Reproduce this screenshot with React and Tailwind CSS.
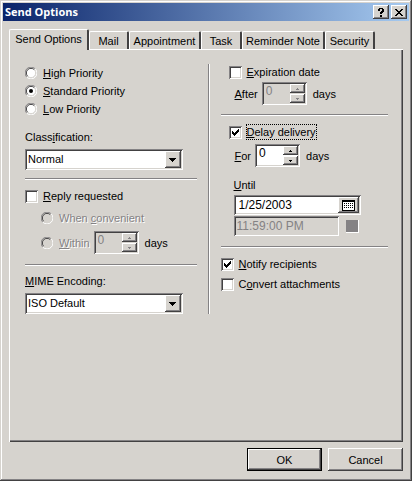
import React, { useState } from "react";

const raised =
  "bg-[#d6d3ce] shadow-[inset_-1px_-1px_#424142,inset_1px_1px_#ffffff,inset_-2px_-2px_#848284]";
const sunken =
  "shadow-[inset_1px_1px_#848284,inset_-1px_-1px_#ffffff,inset_2px_2px_#424142,inset_-2px_-2px_#d6d3ce]";
const disabledText = "text-[#848284] [text-shadow:1px_1px_#ffffff]";

const tabs = [
  { label: "Send Options", width: "w-20" },
  { label: "Mail", width: "w-[40px]" },
  { label: "Appointment", width: "w-[72px]" },
  { label: "Task", width: "w-[41px]" },
  { label: "Reminder Note", width: "w-[83px]" },
  { label: "Security", width: "w-[50px]" },
];

const Divider = () => (
  <hr className="h-[2px] border-0 border-t border-[#848284] bg-white" />
);

const Radio = ({ id, name, children, disabled, ...props }) => (
  <div className="flex items-center gap-1.5">
    <span className="relative flex h-3 w-3">
      <input
        id={id}
        name={name}
        type="radio"
        disabled={disabled}
        className="peer h-3 w-3 appearance-none"
        {...props}
      />
      <svg
        viewBox="0 0 12 12"
        className="pointer-events-none absolute inset-0 h-3 w-3 peer-checked:[&_.dot]:opacity-100"
        fill="none"
      >
        <circle cx="6" cy="6" r="5" fill={disabled ? "#d6d3ce" : "#ffffff"} />
        <path d="M1.8 10.2A5.5 5.5 0 0 1 10.2 1.8" stroke="#848284" />
        <path d="M10.2 1.8A5.5 5.5 0 0 1 1.8 10.2" stroke="#ffffff" />
        <path d="M2.7 9.3A4.6 4.6 0 0 1 9.3 2.7" stroke="#424142" />
        <path d="M9.3 2.7A4.6 4.6 0 0 1 2.7 9.3" stroke="#d6d3ce" />
        <circle className="dot opacity-0" cx="6" cy="6" r="2" fill="#000000" />
      </svg>
    </span>
    <label htmlFor={id} className={disabled ? disabledText : ""}>
      {children}
    </label>
  </div>
);

const Checkbox = ({ id, children, focused, ...props }) => (
  <div className="flex h-4 items-center gap-1">
    <span className="relative flex h-[13px] w-[13px]">
      <input
        id={id}
        type="checkbox"
        className={`peer h-[13px] w-[13px] appearance-none bg-white ${sunken}`}
        {...props}
      />
      <svg
        viewBox="0 0 13 13"
        shapeRendering="crispEdges"
        className="pointer-events-none absolute inset-0 h-[13px] w-[13px] opacity-0 peer-checked:opacity-100"
      >
        <path d="M3 5h1v1h1v1h1v-1h1v-1h1v-1h1v-1h1v3h-1v1h-1v1h-1v1h-1v1h-1v-1h-1v-1h-1z" />
      </svg>
    </span>
    <label
      htmlFor={id}
      className={`border border-dotted leading-[14px] ${focused ? "border-black" : "border-transparent"}`}
    >
      {children}
    </label>
  </div>
);

const Select = ({ id, options }) => (
  <div className="relative mr-3.5">
    <select
      id={id}
      className={`block h-[21px] w-full appearance-none bg-white pr-5 pl-[3px] leading-[17px] outline-none ${sunken}`}
    >
      {options.map((option) => (
        <option key={option}>{option}</option>
      ))}
    </select>
    <span
      className={`pointer-events-none absolute top-[2px] right-[2px] flex h-[17px] w-4 items-center justify-center ${raised}`}
    >
      <svg viewBox="0 0 7 4" className="h-1 w-[7px]" shapeRendering="crispEdges">
        <path d="M0 0h7v1h-1v1h-1v1h-1v1h-1v-1h-1v-1h-1v-1h-1z" />
      </svg>
    </span>
  </div>
);

const StepButton = ({ label, down, disabled, onClick }) => (
  <button
    type="button"
    aria-label={label}
    disabled={disabled}
    onClick={onClick}
    className={`flex h-[9px] w-[15px] items-center justify-center ${raised}`}
  >
    <svg
      viewBox="0 0 3 2"
      className="h-[2px] w-[3px]"
      shapeRendering="crispEdges"
      fill={disabled ? "#848284" : "#000000"}
    >
      <path d={down ? "M0 0h3v1h-1v1h-1v-1h-1z" : "M1 0h1v1h1v1h-3v-1h1z"} />
    </svg>
  </button>
);

const Spinner = ({ id, disabled }) => {
  const [value, setValue] = useState(0);
  return (
    <span
      className={`flex h-[23px] w-[45px] p-[2px] ${sunken} ${disabled ? "" : "bg-white"}`}
    >
      <input
        id={id}
        type="text"
        value={value}
        disabled={disabled}
        onChange={(e) => setValue(Number(e.target.value) || 0)}
        className={`h-[15px] w-full min-w-0 flex-1 bg-transparent pl-[2px] text-[12px] leading-[15px] outline-none ${disabled ? "text-[#848284]" : ""}`}
      />
      <span className="flex flex-col justify-between">
        <StepButton label="Increase" disabled={disabled} onClick={() => setValue(value + 1)} />
        <StepButton
          label="Decrease"
          down
          disabled={disabled}
          onClick={() => setValue(Math.max(0, value - 1))}
        />
      </span>
    </span>
  );
};

const TitleBar = () => (
  <header className="flex h-[18px] items-center gap-[2px] bg-linear-to-r/srgb from-[#0a246a] to-[#a6caf0] pr-[2px] pl-[2px]">
    <h1 className="flex-1 font-['Open_Sans',sans-serif] text-[11px] leading-4 font-bold text-white">
      Send Options
    </h1>
    <button
      type="button"
      aria-label="Help"
      className={`flex h-3.5 w-4 items-center justify-center ${raised}`}
    >
      <svg viewBox="0 0 6 9" className="h-[9px] w-1.5" shapeRendering="crispEdges">
        <path d="M1 0h4v1h1v3h-1v1h-1v1h-2v-2h1v-1h1v-2h-2v2h-2v-2h1zM2 7h2v2h-2z" />
      </svg>
    </button>
    <button
      type="button"
      aria-label="Close"
      className={`flex h-3.5 w-4 items-center justify-center ${raised}`}
    >
      <svg viewBox="0 0 8 7" className="h-[7px] w-2" shapeRendering="crispEdges">
        <path d="M0 0h2v1h1v1h2v-1h1v-1h2v1h-1v1h-1v1h-1v1h1v1h1v1h1v1h-2v-1h-1v-1h-2v1h-1v1h-2v-1h1v-1h1v-1h1v-1h-1v-1h-1v-1h-1z" />
      </svg>
    </button>
  </header>
);

const LeftColumn = () => (
  <div className="flex flex-col">
    <div className="flex flex-col gap-1 pt-[2px]">
      <Radio id="high" name="priority">
        <u>H</u>igh Priority
      </Radio>
      <Radio id="standard" name="priority" defaultChecked>
        <u>S</u>tandard Priority
      </Radio>
      <Radio id="low" name="priority">
        <u>L</u>ow Priority
      </Radio>
    </div>
    <label htmlFor="classification" className="mt-3.5 mb-[5px]">
      Class<u>i</u>fication:
    </label>
    <Select id="classification" options={["Normal", "Proprietary", "Confidential", "Secret"]} />
    <div className="py-2">
      <Divider />
    </div>
    <Checkbox id="reply">
      <u>R</u>eply requested
    </Checkbox>
    <div className="mt-[7px] flex flex-col gap-1.5 pl-4">
      <Radio id="convenient" name="reply-when" disabled>
        When <u>c</u>onvenient
      </Radio>
      <div className="flex items-center gap-1">
        <Radio id="within" name="reply-when" disabled>
          <u>W</u>ithin
        </Radio>
        <Spinner id="within-days" disabled />
        <label htmlFor="within-days" className="pl-0.5">
          days
        </label>
      </div>
    </div>
    <div className="pt-2.5 pb-2">
      <Divider />
    </div>
    <label htmlFor="mime" className="mb-[5px]">
      <u>M</u>IME Encoding:
    </label>
    <Select id="mime" options={["ISO Default", "UTF-8"]} />
  </div>
);

const RightColumn = () => (
  <div className="flex flex-col">
    <div className="pl-2">
      <Checkbox id="expiration">
        <u>E</u>xpiration date
      </Checkbox>
      <div className="mt-[2px] flex items-center gap-1 pl-1.5">
        <label htmlFor="after-days">
          <u>A</u>fter
        </label>
        <Spinner id="after-days" disabled />
        <label htmlFor="after-days" className="pl-0.5">
          days
        </label>
      </div>
    </div>
    <div className="pt-[9px] pb-2">
      <Divider />
    </div>
    <div className="pl-2">
      <Checkbox id="delay" focused defaultChecked>
        <u>D</u>elay delivery
      </Checkbox>
      <div className="mt-1 flex items-center gap-1 pl-1.5">
        <label htmlFor="for-days">
          <u>F</u>or
        </label>
        <Spinner id="for-days" />
        <label htmlFor="for-days" className="pl-0.5">
          days
        </label>
      </div>
      <div className="mt-[11px] flex flex-col pl-[5px]">
        <label htmlFor="until-date">
          <u>U</u>ntil
        </label>
        <div className={`mt-[3px] flex h-5 w-[127px] bg-white p-[2px] ${sunken}`}>
          <input
            id="until-date"
            type="text"
            defaultValue="1/25/2003"
            className="w-full min-w-0 flex-1 bg-transparent pl-[3px] text-[12px] outline-none"
          />
          <button
            type="button"
            aria-label="Pick a date"
            className={`flex w-[21px] items-center justify-center ${raised}`}
          >
            <svg viewBox="0 0 13 11" className="h-[11px] w-[13px]" shapeRendering="crispEdges">
              <path d="M0 0h13v11h-13z" />
              <path d="M1 2h11v8h-11z" fill="#ffffff" />
              <path d="M2 3.5h9M2 5.5h9M2 7.5h9" stroke="#000000" strokeDasharray="1 1" />
            </svg>
          </button>
        </div>
        <div className="mt-px flex items-center gap-[7px]">
          <input
            id="until-time"
            type="text"
            aria-label="Until time"
            defaultValue="11:59:00 PM"
            disabled
            className={`h-5 w-[105px] pl-[3px] text-[12px] text-[#848284] ${sunken}`}
          />
          <button
            type="button"
            aria-label="Pick a time"
            disabled
            className="h-[13px] w-[13px] bg-[#848284] shadow-[inset_-1px_-1px_#ffffff]"
          />
        </div>
      </div>
    </div>
    <div className="pt-2.5 pb-2">
      <Divider />
    </div>
    <div className="flex flex-col gap-1">
      <Checkbox id="notify" defaultChecked>
        <u>N</u>otify recipients
      </Checkbox>
      <Checkbox id="convert">
        C<u>o</u>nvert attachments
      </Checkbox>
    </div>
  </div>
);

export default function App() {
  const [active, setActive] = useState("Send Options");

  return (
    <div className="flex min-h-screen flex-col bg-[#d6d3ce] p-[3px] font-['Liberation_Sans',sans-serif] text-[11px] leading-[14px] text-black shadow-[inset_-1px_-1px_#424142,inset_1px_1px_#d6d3ce,inset_-2px_-2px_#848284,inset_2px_2px_#ffffff]">
      <TitleBar />
      <main className="flex flex-1 flex-col px-1.5 pt-2 pb-[7px]">
        <div role="tablist" className="flex items-end">
          {tabs.map((tab) => (
            <button
              key={tab.label}
              type="button"
              role="tab"
              aria-selected={active === tab.label}
              onClick={() => setActive(tab.label)}
              className={`rounded-t-[2px] border-t border-r-2 border-l border-t-white border-r-[#424142] border-l-white whitespace-nowrap ${tab.width} ${
                active === tab.label ? "relative -mb-px h-[21px] bg-[#d6d3ce] pb-[2px]" : "h-[18px]"
              }`}
            >
              {tab.label}
            </button>
          ))}
        </div>
        <section
          role="tabpanel"
          className="grid flex-1 grid-cols-[171fr_2px_167fr] content-start gap-x-[11px] border-t border-l border-white px-[15px] pt-3.5 pb-7 shadow-[inset_-1px_-1px_#424142,inset_-2px_-2px_#848284]"
        >
          <LeftColumn />
          <div className="border-l border-[#848284] bg-white" />
          <RightColumn />
        </section>
        <footer className="mt-1.5 flex justify-end gap-1.5">
          <button type="button" className={`h-[23px] w-[75px] border border-black ${raised}`}>
            OK
          </button>
          <button type="button" className={`h-[23px] w-[75px] ${raised}`}>
            Cancel
          </button>
        </footer>
      </main>
    </div>
  );
}
